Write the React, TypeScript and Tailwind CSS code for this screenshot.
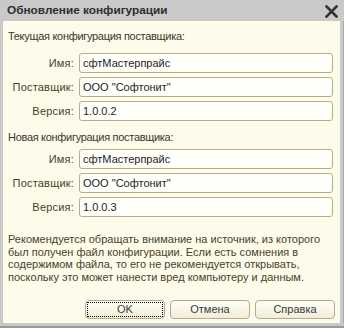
import React from "react";

const font = { fontFamily: '"Liberation Sans", Arial, sans-serif' };

function Row({ label, value }: { label: string; value: string }) {
  return (
    <div className="flex items-center h-[20px]">
      <div className="w-[72px] pr-[1px] text-right text-[11px] tracking-[0.2px] text-[#4a3f28] leading-[20px]">{label}</div>
      <div className="ml-[4px] w-[254px] h-[20px] rounded-[3px] border border-[#b9ac88] bg-[#fffffa] pl-[3px] text-[11px] leading-[18px] text-[#1e1e1e]">
        {value}
      </div>
    </div>
  );
}

function Btn({ children, focused }: { children: React.ReactNode; focused?: boolean }) {
  return (
    <div className="w-[80px] h-[19px] rounded-[4px] border border-[#b8aa88] bg-gradient-to-b from-[#fffef8] to-[#f1edd9] flex items-center justify-center relative text-[11px] text-[#3a3a3a]">
      {focused && <div className="absolute inset-[1px] border border-dotted border-black" />}
      <span className="relative">{children}</span>
    </div>
  );
}

export default function App() {
  return (
    <div className="w-[344px] h-[328px] bg-[#c9c9c9] flex flex-col" style={font}>
      <div className="h-[21px] flex items-center justify-between pl-[7px] pr-[6px]">
        <span className="font-['Liberation_Sans_Narrow','Liberation_Sans',sans-serif] text-[11.8px] font-bold text-[#2e2e2e] mt-[1px]">Обновление конфигурации</span>
        <svg width="13" height="13" viewBox="0 0 13 13" className="mt-[1px]">
          <path d="M1.5 1.5 L11.5 11.5 M11.5 1.5 L1.5 11.5" stroke="#333" strokeWidth="2.6" strokeLinecap="square" />
        </svg>
      </div>
      <div className="flex-1 flex">
        <div className="w-[3px]" />
        <div className="w-[337px] h-[302px] bg-[#fdfbea] flex flex-col pl-[5px] text-[#4a3f28]">
          <div className="mt-[8px] text-[11px] leading-[14px] tracking-[-0.3px] text-[#3d3628]">Текущая конфигурация поставщика:</div>
          <div className="mt-[10px] ml-[-5px] flex flex-col gap-[4px]">
            <Row label="Имя:" value="сфтМастерпрайс" />
            <Row label="Поставщик:" value={'ООО "Софтонит"'} />
            <Row label="Версия:" value="1.0.0.2" />
          </div>
          <div className="mt-[9px] text-[11px] leading-[14px] tracking-[-0.3px] text-[#3d3628]">Новая конфигурация поставщика:</div>
          <div className="mt-[5px] ml-[-5px] flex flex-col gap-[4px]">
            <Row label="Имя:" value="сфтМастерпрайс" />
            <Row label="Поставщик:" value={'ООО "Софтонит"'} />
            <Row label="Версия:" value="1.0.0.3" />
          </div>
          <div className="mt-[16px] text-[11px] leading-[12.7px] whitespace-nowrap">
            Рекомендуется обращать внимание на источник, из которого
            <br />
            был получен файл конфигурации. Если есть сомнения в
            <br />
            содержимом файла, то его не рекомендуется открывать,
            <br />
            поскольку это может нанести вред компьютеру и данным.
          </div>
          <div className="mt-auto mb-[4px] flex justify-end gap-[5px] pr-[5px]">
            <Btn focused>OK</Btn>
            <Btn>Отмена</Btn>
            <Btn>Справка</Btn>
          </div>
        </div>
        <div className="flex-1 border-r border-[#a8a8a8]" />
      </div>
      <div className="h-[5px] border-b-2 border-[#9a9a9a]" />
    </div>
  );
}
